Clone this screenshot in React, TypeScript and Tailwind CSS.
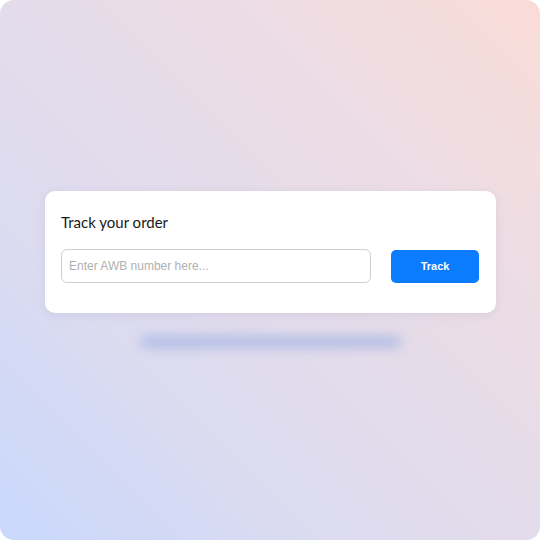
export default function App() {
  return (
    <div className="h-[540px] w-[540px] bg-white">
      <div className="flex h-full w-full flex-col rounded-[14px] bg-[linear-gradient(45deg,#c9d8fc_0%,#dcdbf0_30%,#e5dce9_55%,#f0dde2_80%,#fadcd6_100%)] pl-[45px] pr-[44px] pt-[191px]">
        <div className="flex flex-col rounded-[10px] bg-white pb-[30px] pl-4 pr-[17px] pt-[21px] shadow-[0_2px_8px_rgba(120,110,160,0.12)]">
          <h2 className="text-[15px] leading-5 text-[#1a1a1a] [font-family:Lato,Inter,sans-serif]">
            Track your order
          </h2>
          <div className="mt-[17px] flex items-center gap-5">
            <input
              type="text"
              placeholder="Enter AWB number here..."
              className="h-[34px] flex-1 rounded-md border border-[#cfcfcf] bg-white px-[7px] text-[12px] text-[#333] outline-none placeholder:text-[#b0b0b0] [font-family:'Liberation_Sans',Arial,sans-serif]"
            />
            <button className="mt-px h-[33px] w-[88px] rounded-[5px] bg-[#0b7cfd] text-[11px] font-bold text-white [font-family:'Liberation_Sans',Arial,sans-serif]">
              Track
            </button>
          </div>
        </div>
        <div className="mx-auto mt-[23px] h-[12px] w-[262px] rounded-full bg-[#a3b3e2] opacity-75 blur-[6px]" />
      </div>
    </div>
  )
}
